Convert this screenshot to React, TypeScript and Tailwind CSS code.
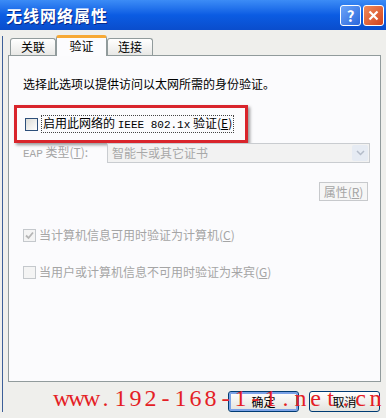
import React from 'react'

const cjk = { fontFamily: '"Noto Sans CJK SC", "Liberation Sans", sans-serif' }
const mono = { fontFamily: '"Liberation Mono", "Noto Sans CJK SC", monospace' }

const watermark = 'www.192-168-1-1.net.cn'

function Checkbox({ checked = false, disabled = false }: { checked?: boolean; disabled?: boolean }) {
  return (
    <span
      className={
        'flex h-[13px] w-[13px] shrink-0 items-center justify-center border ' +
        (disabled ? 'border-[#c4c8cc] bg-[#f4f4f4]' : 'border-[#2d4f7a] bg-gradient-to-br from-[#dcdcd7] to-white')
      }
    >
      {checked && (
        <svg width="9" height="9" viewBox="0 0 9 9">
          <path d="M1 4.5 L3.5 7 L8 1.5" fill="none" stroke={disabled ? '#b5b5b5' : '#21a121'} strokeWidth="1.8" />
        </svg>
      )}
    </span>
  )
}

function Tab({ label, active = false }: { label: string; active?: boolean }) {
  if (active) {
    return (
      <div className="relative z-10 -mb-px flex h-[21px] w-[51px] items-start justify-center rounded-t-[3px] border-x border-t-[3px] border-x-[#919b9c] border-t-[#f7a935] bg-[#fcfcfe] pt-[1px] text-[12px] leading-[14px] text-black">
        {label}
      </div>
    )
  }
  return (
    <div className="flex h-[17px] w-[46px] items-center justify-center rounded-t-[3px] border border-b-0 border-[#919b9c] bg-gradient-to-b from-white to-[#e8e8e6] text-[12px] leading-[14px] text-black">
      {label}
    </div>
  )
}

function XpButton({ label, primary = false }: { label: string; primary?: boolean }) {
  return (
    <div
      className={
        'flex h-[21px] w-[71px] items-center justify-center rounded-[3px] border border-[#003c74] bg-gradient-to-b from-white to-[#e3e3de] text-[12px] text-black ' +
        (primary ? 'shadow-[inset_0_0_0_2px_#7ba2e7]' : '')
      }
    >
      {label}
    </div>
  )
}

export default function App() {
  return (
    <div className="relative h-[418px] w-[386px] overflow-hidden bg-[#efefec]" style={cjk}>
      {/* Title bar */}
      <div className="flex h-[30px] items-center justify-between bg-gradient-to-b from-[#3c8cf6] via-[#0b5ce3] to-[#0a4dcc] pl-[6px] pr-[2px]">
        <span className="text-[16px] font-bold tracking-[1px] text-white [text-shadow:1px_1px_0_#0a2a8a]">无线网络属性</span>
        <div className="flex gap-[2px]">
          <div className="flex h-[21px] w-[21px] items-center justify-center rounded-[3px] border border-white bg-gradient-to-br from-[#6ca4f8] to-[#2a66dc] text-[15px] font-bold leading-none text-white">
            ?
          </div>
          <div className="flex h-[21px] w-[21px] items-center justify-center rounded-[3px] border border-white bg-gradient-to-br from-[#f08a5a] to-[#d2411c]">
            <svg width="11" height="11" viewBox="0 0 11 11">
              <path d="M1.5 1.5 L9.5 9.5 M9.5 1.5 L1.5 9.5" stroke="white" strokeWidth="2.2" />
            </svg>
          </div>
        </div>
      </div>

      <div className="ml-[2px] border-l border-[#3d5f99] pl-[5px]">
        {/* Tabs */}
        <div className="mt-[6px] flex h-[19px] items-end pl-[2px]">
          <Tab label="关联" />
          <Tab label="验证" active />
          <Tab label="连接" />
        </div>

        {/* Panel */}
        <div className="flex h-[327px] w-[373px] flex-col border border-[#919b9c] bg-[#fbfbfd] pt-[20px] text-[12px] leading-[16px]">
          <div className="pl-[14px] text-black">选择此选项以提供访问以太网所需的身份验证。</div>

          <div className="ml-[5px] mt-[13px] flex h-[38px] w-[234px] items-center gap-[3px] border-[3px] border-[#d9252c] pl-[8px] shadow-[2px_2px_3px_rgba(0,0,0,0.4)]">
            <Checkbox />
            <span className="border border-dotted border-[#444] px-px leading-[14px] text-black">
              启用此网络的 <span style={mono} className="text-[11px]">IEEE 802.1x</span> 验证(<span className="underline">E</span>)
            </span>
          </div>

          <div className="flex h-[20px] items-center pr-[10px]">
            <span className="w-[98px] pl-[14px] text-[#a5a5a5]">
              <span style={mono} className="text-[11px]">EAP</span> 类型(<span className="underline">T</span>):
            </span>
            <div className="flex h-[20px] flex-1 items-center justify-between border border-[#c9ccd0] bg-[#f2f2f2] pl-[4px] pr-px text-[#a8a8a8]">
              <span>智能卡或其它证书</span>
              <span className="flex h-[16px] w-[16px] items-center justify-center rounded-[2px] bg-[#e6ebf3]">
                <svg width="9" height="6" viewBox="0 0 9 6">
                  <path d="M1 1 L4.5 4.5 L8 1" fill="none" stroke="#b4bcc9" strokeWidth="1.5" />
                </svg>
              </span>
            </div>
          </div>

          <div className="mt-[19px] flex justify-end pr-[12px]">
            <div className="flex h-[19px] w-[49px] items-center justify-center border border-[#c7c9cc] bg-[#f6f6f6] text-[#a5a5a5]">
              属性(<span className="underline">R</span>)
            </div>
          </div>

          <div className="mt-[26px] flex items-center gap-[3px] pl-[14px] text-[#a5a5a5]">
            <Checkbox checked disabled />
            <span>当计算机信息可用时验证为计算机(<span className="underline">C</span>)</span>
          </div>

          <div className="mt-[21px] flex items-center gap-[3px] pl-[14px] text-[#a5a5a5]">
            <Checkbox disabled />
            <span>当用户或计算机信息不可用时验证为来宾(<span className="underline">G</span>)</span>
          </div>
        </div>

        {/* Dialog buttons */}
        <div className="mt-[9px] flex justify-end gap-[10px] pr-[6px]">
          <XpButton label="确定" primary />
          <XpButton label="取消" />
        </div>
      </div>

      {/* Watermark over the dialog */}
      <div
        className="pointer-events-none absolute left-[53px] top-[385px] flex text-[24px] leading-[26px] text-[#e41e26]"
        style={{ fontFamily: '"Liberation Serif", serif' }}
      >
        {watermark.split('').map((ch, i) => (
          <span key={i} className="inline-block w-[15px] text-center">
            {ch}
          </span>
        ))}
      </div>
    </div>
  )
}
